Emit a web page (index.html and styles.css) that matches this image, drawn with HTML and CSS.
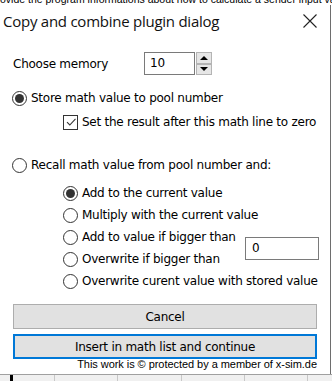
FILE: index.html
```html
<!DOCTYPE html>
<html>
<head>
<meta charset="utf-8">
<link rel="stylesheet" href="styles.css">
</head>
<body>
<div class="bgtop"><div class="bgtext">ovide the program informations about how to calculate a sender input value and</div></div>
<div class="dialog">
  <div class="titlebar">
    <span class="title">Copy and combine plugin dialog</span>
    <svg class="close" width="14" height="14" viewBox="0 0 14 14"><path d="M0.5 0.5 L13.5 13.5 M13.5 0.5 L0.5 13.5" stroke="#222" stroke-width="1.1" fill="none"/></svg>
  </div>
  <div class="content">
    <div class="memrow">
      <span class="memlabel">Choose memory</span>
      <div class="spin">
        <div class="spinbox">10</div>
        <div class="spinbtns">
          <div class="sbtn"><span class="tri up"></span></div>
          <div class="sbtn"><span class="tri down"></span></div>
        </div>
      </div>
    </div>
    <div class="opt main store"><span class="radio checked"></span><span>Store math value to pool number</span></div>
    <div class="opt sub check"><span class="checkbox"><svg width="12" height="12" viewBox="0 0 12 12"><path d="M2 6.2 L4.8 9 L10.5 2.8" stroke="#333" stroke-width="1.1" fill="none"/></svg></span><span>Set the result after this math line to zero</span></div>
    <div class="opt main recall"><span class="radio"></span><span>Recall math value from pool number and:</span></div>
    <div class="subgrid">
      <div class="opt r1"><span class="radio checked"></span><span>Add to the current value</span></div>
      <div class="opt r2"><span class="radio"></span><span>Multiply with the current value</span></div>
      <div class="opt r3"><span class="radio"></span><span>Add to value if bigger than</span></div>
      <div class="opt r4"><span class="radio"></span><span>Overwrite if bigger than</span></div>
      <div class="opt r5"><span class="radio"></span><span>Overwrite curent value with stored value</span></div>
      <div class="valbox">0</div>
    </div>
    <div class="btn cancel">Cancel</div>
    <div class="btn insert">Insert in math list and continue</div>
    <div class="footer">This work is © protected by a member of x-sim.de</div>
  </div>
</div>
<div class="bgbottom">
  <div class="cell c0"></div>
  <div class="cell c1"></div>
  <div class="cell c2"></div>
  <div class="cell c3"></div>
  <div class="cell c4"></div>
  <div class="cell c5"></div>
</div>
</body>
</html>
```
FILE: styles.css
```css
html, body {
  margin: 0;
  padding: 0;
  background: #ffffff;
}
body {
  width: 332px;
  height: 381px;
  overflow: hidden;
  font-family: "DejaVu Sans", sans-serif;
  font-size: 12px;
  letter-spacing: -0.25px;
  color: #000;
}
.bgtop {
  height: 5px;
  overflow: hidden;
}
.bgtext {
  margin-top: -6px;
  font-family: "Liberation Sans", sans-serif;
  font-size: 10.5px;
  line-height: 10px;
  letter-spacing: 0;
  white-space: nowrap;
}
.dialog {
  width: 331px;
  height: 369px;
  background: #fff;
  border-right: 1px solid #6e6e6e;
  box-sizing: border-box;
}
.titlebar {
  height: 31px;
  display: flex;
  align-items: center;
  justify-content: space-between;
  padding: 0 13px 0 3px;
}
.title {
  font-family: "Open Sans", sans-serif;
  font-size: 15px;
  letter-spacing: -0.25px;
  color: #111;
}
.close {
  display: block;
}
.content {
  padding: 16px 12px 0 12px;
}
.memrow {
  display: flex;
  align-items: center;
  height: 23px;
}
.memlabel {
  width: 131px;
  padding-left: 1px;
}
.spin {
  display: flex;
  height: 23px;
}
.spinbox {
  width: 51px;
  height: 23px;
  box-sizing: border-box;
  border: 1px solid #7a7a7a;
  padding: 3px 0 0 5px;
}
.spinbtns {
  display: flex;
  flex-direction: column;
  width: 16px;
  margin-left: 1px;
}
.sbtn {
  flex: 1;
  background: #e6e6e6;
  border: 1px solid #b4b4b4;
  display: flex;
  align-items: center;
  justify-content: center;
}
.tri {
  width: 0;
  height: 0;
  border-left: 4px solid transparent;
  border-right: 4px solid transparent;
}
.tri.up { border-bottom: 4px solid #000; }
.tri.down { border-top: 4px solid #000; }
.opt {
  display: flex;
  align-items: center;
  height: 22px;
  gap: 4px;
  white-space: nowrap;
}
.main.store { margin-top: 12px; }
.sub { padding-left: 51px; }
.sub.check { margin-top: 2px; }
.main.recall { margin-top: 21px; }
.radio {
  width: 15px;
  height: 15px;
  border: 1px solid #333;
  border-radius: 50%;
  box-sizing: border-box;
  display: flex;
  align-items: center;
  justify-content: center;
  flex: none;
}
.radio.checked::after {
  content: "";
  width: 9px;
  height: 9px;
  border-radius: 50%;
  background: #333;
}
.checkbox {
  width: 15px;
  height: 15px;
  border: 1px solid #333;
  box-sizing: border-box;
  display: flex;
  align-items: center;
  justify-content: center;
  flex: none;
}
.checkbox svg { display: block; }
.subgrid {
  display: grid;
  grid-template-columns: 182px 74px;
  grid-template-rows: repeat(5, 22px);
  padding-left: 51px;
  margin-top: 6px;
}
.r1 { grid-row: 1; grid-column: 1; }
.r2 { grid-row: 2; grid-column: 1; }
.r3 { grid-row: 3; grid-column: 1; }
.r4 { grid-row: 4; grid-column: 1; }
.r5 { grid-row: 5; grid-column: 1 / span 2; }
.valbox {
  grid-row: 3 / span 2;
  grid-column: 2;
  align-self: center;
  height: 23px;
  box-sizing: border-box;
  border: 1px solid #7a7a7a;
  padding: 3px 0 0 6px;
}
.btn {
  margin-left: 1px;
  width: 304px;
  height: 25px;
  box-sizing: border-box;
  background: #e1e1e1;
  border: 1px solid #adadad;
  display: flex;
  align-items: center;
  justify-content: center;
}
.cancel { margin-top: 12px; }
.insert {
  margin-top: 5px;
  border: 2px solid #0078d7;
}
.footer {
  width: 305px;
  text-align: right;
  font-family: "Liberation Sans", sans-serif;
  font-size: 11px;
  line-height: 11px;
  letter-spacing: -0.05px;
}
.bgbottom {
  display: flex;
  height: 7px;
  background: #f0f0f0;
  border-top: 1px solid #a0a0a0;
}
.cell {
  border-right: 1px solid #c8c8c8;
  height: 100%;
}
.c0 { width: 10px; border-right: 3px solid #000; }
.c1 { width: 41px; }
.c2 { width: 62px; }
.c3 { width: 63px; }
.c4 { width: 62px; }
.c5 { width: 62px; }
```
